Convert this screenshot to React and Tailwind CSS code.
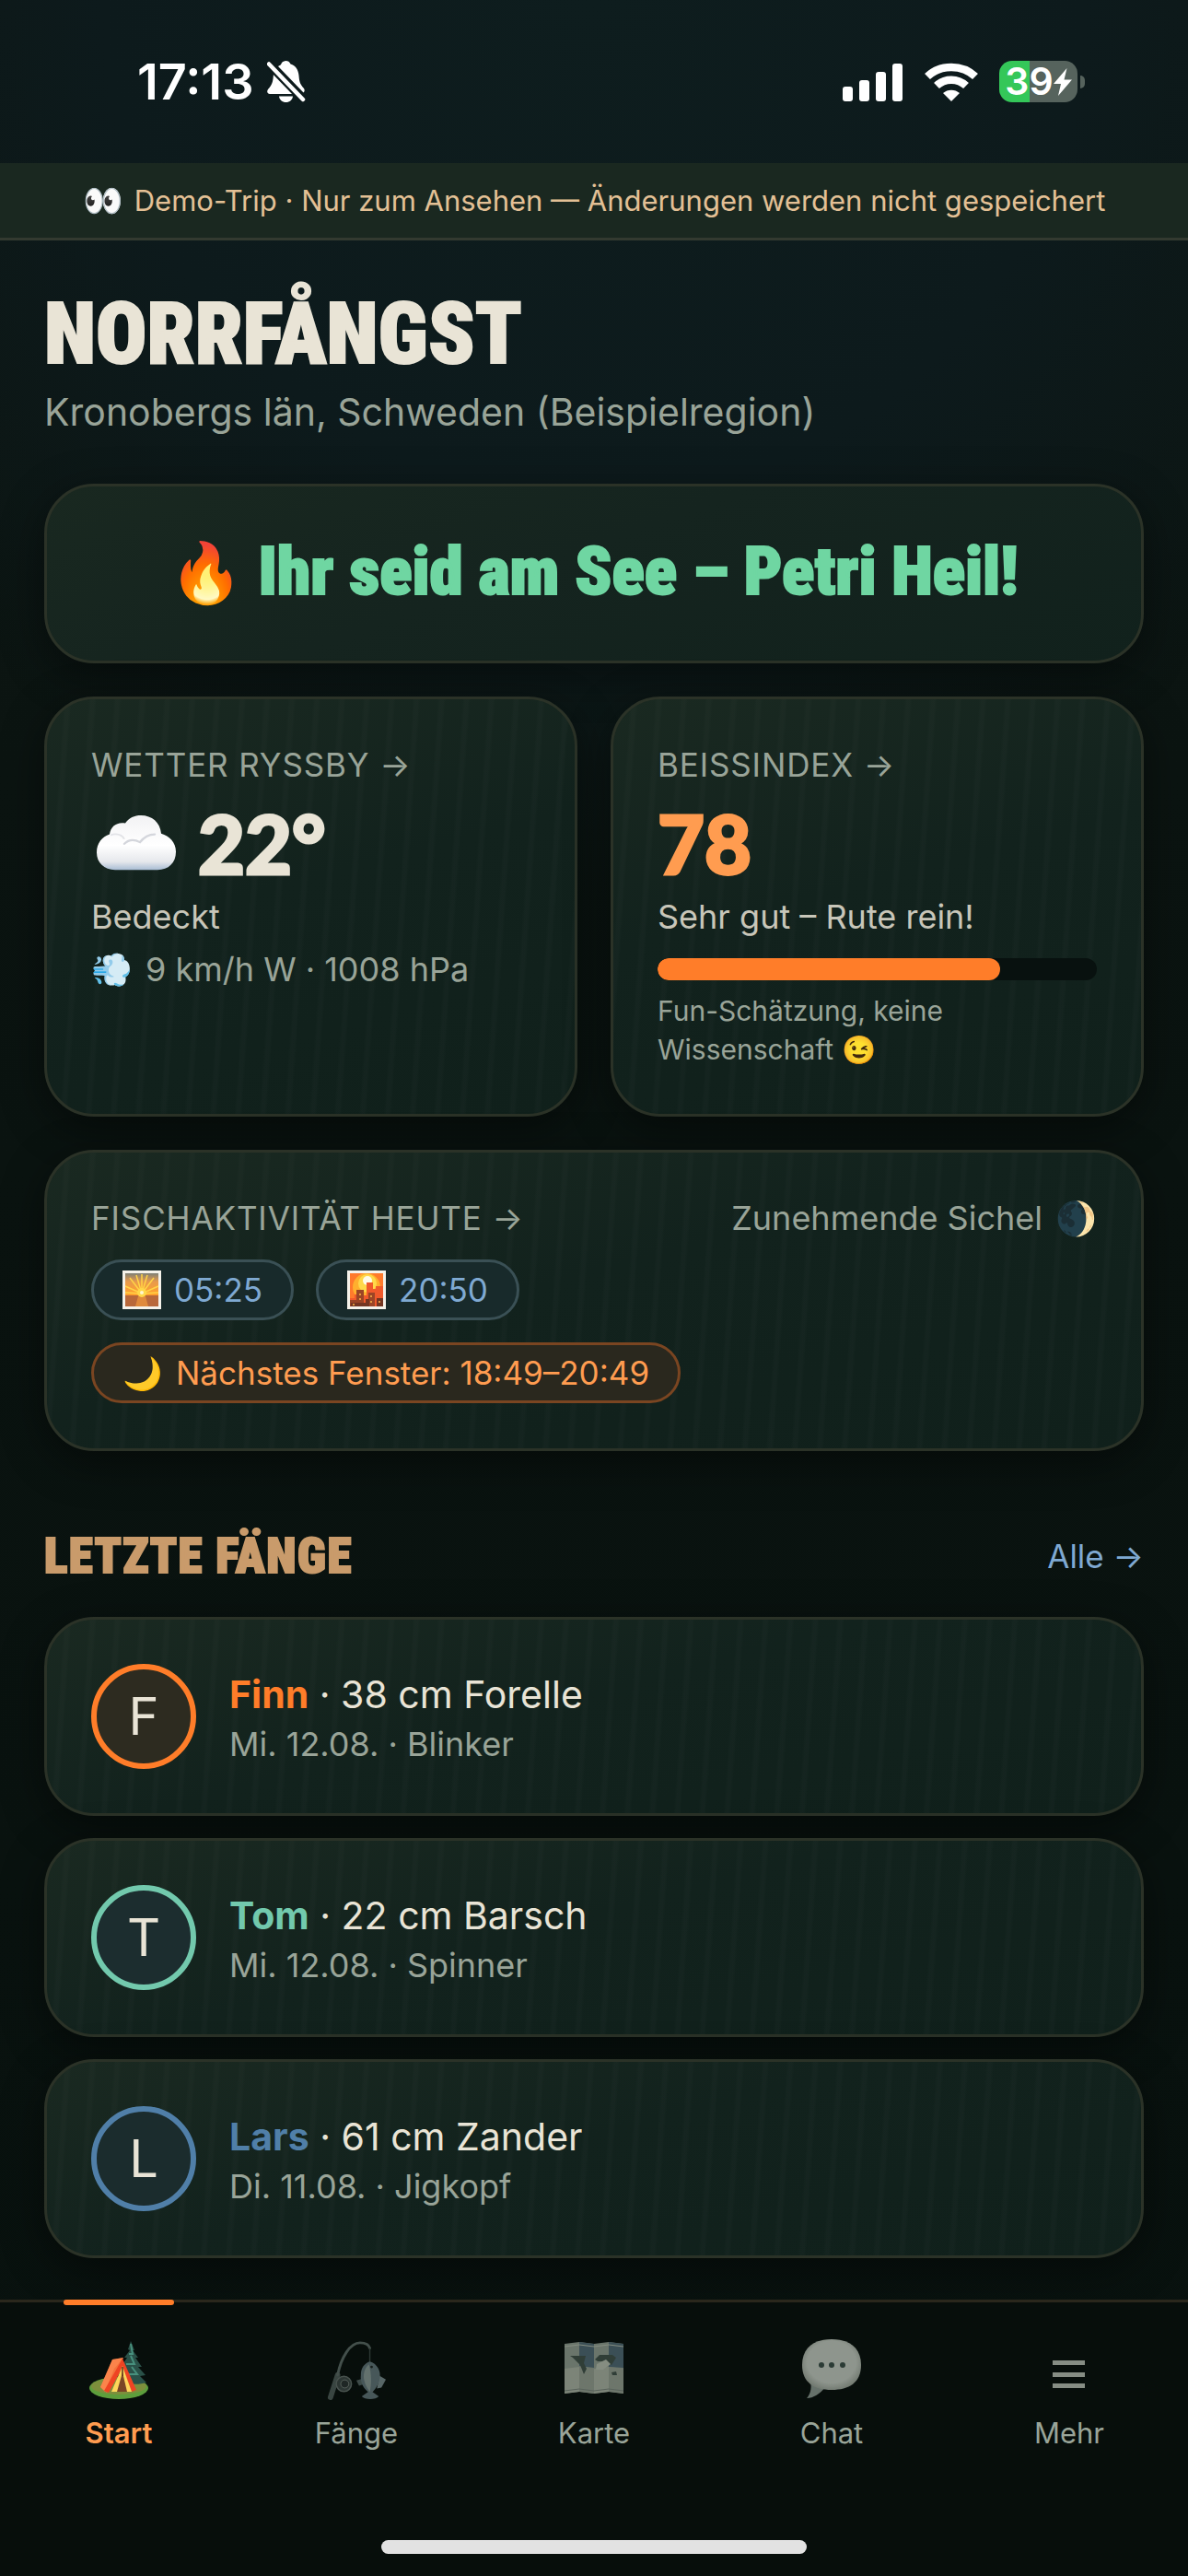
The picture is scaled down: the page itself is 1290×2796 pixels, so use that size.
const display = 'font-["Roboto_Condensed","Roboto",sans-serif] font-black [-webkit-text-stroke:2px_currentColor]';
const numeral = 'font-["Lato",sans-serif] text-[88px] leading-none font-black [-webkit-text-stroke:3px_currentColor]';
const plain =
  'rounded-[54px] border-[3px] border-[#2b3227] shadow-[0_12px_48px_rgba(0,0,0,0.45)] bg-[linear-gradient(160deg,#192820_0%,#15241f_45%,#11211c_100%)]';
const card =
  'rounded-[54px] border-[3px] border-[#2b3227] shadow-[0_12px_48px_rgba(0,0,0,0.45)] bg-[repeating-linear-gradient(94deg,transparent_0px,transparent_18px,rgba(255,255,255,0.016)_21px,rgba(255,255,255,0.016)_24px,transparent_27px),linear-gradient(165deg,#1a2921_0%,#12221d_45%,#10201b_100%)]';

function BellOff() {
  return (
    <svg viewBox="0 0 42 46" className="h-[46px] w-[42px]" aria-label="Stumm" fill="#fff">
      <path d="M12 6 C14 5 15 4.500 15.500 3 C16.500 .8 19 0 20.500 0 C22.500 0 24.500 1 25.500 3.500 C31 5 34 10 34.500 16 C35 22 35.500 25 40 30 C41 31.500 41 33 39.500 34.500 Z" />
      <path d="M7 14 L28 36 H3 C0 36 -.5 33 1 31 C5.500 26 6.500 23 7 14 Z" />
      <path d="M13 38.500 H28 C27.500 42.500 24.500 45 20.500 45 C16.500 45 13.500 42.500 13 38.500 Z" />
      <path d="M2 3.500 L39 42" stroke="#0d1a1b" strokeWidth="9" />
      <path d="M2 3.500 L39 42" stroke="#fff" strokeWidth="4.500" strokeLinecap="round" />
    </svg>
  );
}

function Signal() {
  return (
    <svg viewBox="0 0 66 42" className="h-[42px] w-[66px]" fill="#fff" aria-label="Empfang">
      <rect x="0" y="26" width="11" height="16" rx="3" />
      <rect x="18" y="19" width="11" height="23" rx="3" />
      <rect x="36" y="10" width="11" height="32" rx="3" />
      <rect x="54" y="1" width="11" height="41" rx="3" />
    </svg>
  );
}

function Wifi() {
  return (
    <svg viewBox="0 0 58 42" className="h-[42px] w-[58px]" fill="none" aria-label="WLAN">
      <path d="M3 15 C17 1.500 41 1.500 55 15" stroke="#fff" strokeWidth="8.500" />
      <path d="M13 25 C22 16.500 36 16.500 45 25" stroke="#fff" strokeWidth="8.500" />
      <path d="M29 42 L20 33 C25 28.500 33 28.500 38 33 Z" fill="#fff" />
    </svg>
  );
}

function Battery() {
  return (
    <div className="flex items-center gap-[3px]" aria-label="Akku 39 %">
      <div className="flex h-[45px] w-[85px] items-center justify-center rounded-[14px] bg-[linear-gradient(90deg,#34c759_39%,#56635d_39%)]">
        <span className="text-[41px] leading-none font-semibold text-white">39</span>
        <svg viewBox="0 0 20 30" className="h-[30px] w-[20px]" fill="#fff">
          <path d="M14.500 0 L0 17 H8 L5 30 L20 12.500 H11.500 Z" />
        </svg>
      </div>
      <div className="h-[14px] w-[5px] rounded-r-full bg-[#56635d]" />
    </div>
  );
}

function Cloud() {
  return (
    <svg viewBox="0 0 86 70" preserveAspectRatio="none" className="h-[60px] w-[86px]" aria-label="Wolke">
      <defs>
        <linearGradient id="cloudFill" x1="0" y1="0" x2="0" y2="1">
          <stop offset="0" stopColor="#f2f2f4" />
          <stop offset="0.55" stopColor="#ffffff" />
          <stop offset="0.85" stopColor="#e6e8ec" />
          <stop offset="1" stopColor="#a9bdd4" />
        </linearGradient>
      </defs>
      <path
        d="M20 69 C8 69 0 60 0 47 C0 35 6 27 14 24 C15 14 22 8 31 10 C35 3 41 0 48 0 C60 0 69 9 70 23 C79 26 86 34 86 46 C86 60 78 69 66 69 Z"
        fill="url(#cloudFill)"
      />
      <path d="M30 36 C36 29 42 31 47 34 C51 28 56 24 63 24" fill="none" stroke="#d4d6dc" strokeWidth="2.500" strokeLinecap="round" />
      <path d="M15 25 C22 22 28 25 30 30" fill="none" stroke="#e2e3e7" strokeWidth="2" />
    </svg>
  );
}

function Sunrise() {
  return (
    <svg viewBox="0 0 42 42" className="size-[42px]" aria-label="Sonnenaufgang">
      <defs>
        <linearGradient id="riseSky" x1="0" y1="0" x2="0" y2="1">
          <stop offset="0" stopColor="#7f8076" />
          <stop offset="0.25" stopColor="#e79a4c" />
          <stop offset="0.6" stopColor="#ffa02e" />
        </linearGradient>
      </defs>
      <rect width="42" height="42" fill="#f5f2ea" />
      <rect x="3" y="3" width="36" height="36" fill="url(#riseSky)" />
      <g stroke="#ffd447" strokeWidth="1.500">
        <path d="M21 25 L3 17 M21 25 L8 8 M21 25 L15 5 M21 25 L21 4 M21 25 L27 5 M21 25 L34 8 M21 25 L39 17 M21 25 L3 24 M21 25 L39 24" />
      </g>
      <rect x="3" y="27" width="36" height="12" fill="#b9683a" />
      <path d="M17 28 H25 L28 39 H14 Z" fill="#e08a3c" />
      <circle cx="21" cy="24" r="5" fill="#ffd84a" />
      <circle cx="21" cy="24" r="2" fill="#fff6cf" />
    </svg>
  );
}

function Sunset() {
  return (
    <svg viewBox="0 0 42 42" className="size-[42px]" aria-label="Sonnenuntergang">
      <rect width="42" height="42" fill="#f5f2ea" />
      <rect x="3" y="3" width="36" height="36" fill="#ff7a2c" />
      <circle cx="21" cy="18" r="15" fill="#ffb02e" />
      <circle cx="22" cy="14" r="10" fill="#ffd84a" />
      <circle cx="22" cy="11" r="5" fill="#fffbe8" />
      <path d="M3 39 V30 H8 V26 H12 V22 H18 V27 H21 V13 H28 V20 H31 V17 H39 V39 Z" fill="#f0592b" />
      <path d="M3 39 V32 H10 V21 H18 V39 Z M23 39 V24 H30 V39 Z" fill="#9b4526" />
      <path d="M4 35 H20 V39 H4 Z M20 31 H24 V39 H20 Z M32 30 H39 V39 H32 Z" fill="#743521" />
      <path d="M6 37 h2 M13 26 h2 M13 31 h2 M25 28 h2 M25 34 h2 M34 34 h2" stroke="#ffb648" strokeWidth="1.500" />
    </svg>
  );
}

function Tent() {
  return (
    <svg viewBox="0 0 66 66" className="size-[66px]" aria-hidden="true">
      <ellipse cx="33" cy="53" rx="32" ry="12" fill="#5d9e3c" />
      <ellipse cx="33" cy="51" rx="30" ry="9" fill="#7d8f3c" />
      <rect x="45" y="42" width="4" height="9" fill="#6a4127" />
      <path d="M46 2 L50 12 L48 12 L54 20 L51 20 L58 30 L54 30 L62 39 L56 40 L63 47 C53 50 44 49 36 45 L34 40 L38 30 L36 29 L42 20 L39 20 L45 12 L43 11 Z" fill="#2a5148" />
      <path d="M46 5 L48 16 L44 16 M46 18 L50 27 L41 27 M47 30 L53 38 L42 38" fill="none" stroke="#47907d" strokeWidth="2" />
      <path d="M26 22 L38 20 L20 58 L13 52 Z" fill="#f4743b" />
      <path d="M26 22 L38 20 L28 32 L18 57 L13 52 Z" fill="#ff8f56" opacity=".6" />
      <path d="M37 21 L52 55 L47 57 L37 31 L22 58 L17 56 Z" fill="#ef4423" />
      <path d="M37 29 L47 57 H25 Z" fill="#ffd65a" />
      <path d="M37 36 L42 57 H31 Z" fill="#7a4626" />
      <path d="M37 30 V40" stroke="#5c3218" strokeWidth="1.500" />
    </svg>
  );
}

function Rod() {
  return (
    <svg viewBox="12 16 68 68" className="size-[66px] opacity-80" aria-hidden="true" fill="none">
      <path d="M17 81 L25 56" stroke="#46534f" strokeWidth="6" strokeLinecap="round" />
      <path d="M25 56 C29 36 39 20 50 20 C56 20 60 22 61 26" stroke="#52605b" strokeWidth="3" strokeLinecap="round" />
      <path d="M61 26 V43" stroke="#36423e" strokeWidth="1.500" />
      <circle cx="32" cy="66" r="8.500" fill="#36403d" stroke="#59645f" strokeWidth="1.500" />
      <circle cx="33" cy="66" r="4.500" fill="#262e2c" stroke="#6b7670" strokeWidth="1" />
      <path d="M72 57 L79 61 L74 70 L69 71 Z" fill="#6c7d7e" />
      <path d="M53 60 L46 62 L49 68 L55 66 Z" fill="#4b5a58" />
      <path d="M61 41 C69 43 74 52 72 60 C71 67 67 72 64 75 L71 80 C68 84 55 84 52 80 L59 75 C54 71 50 64 51 56 C51 48 55 43 61 41 Z" fill="#586a6d" />
      <path d="M60 44 C55 48 53 56 55 63 C56 68 59 72 61 75 C63 66 63 54 60 44 Z" fill="#7b8a86" />
      <circle cx="63" cy="47" r="1.500" fill="#1b2422" />
    </svg>
  );
}

function MapIcon() {
  return (
    <svg viewBox="0 0 66 66" className="size-[66px]" aria-hidden="true">
      <path d="M1 5 L17 3 L33 5 L49 3 L65 5 V59 L49 57 L33 59 L17 57 L1 59 Z" fill="#6a756b" />
      <path d="M17 3 L33 5 V31 L17 29 Z M49 3 L65 5 V31 L49 30 Z" fill="#3b4f56" />
      <path d="M1 32 L17 30 V57 L1 59 Z M33 32 L49 30 V57 L33 59 Z" fill="#7c8478" />
      <path d="M17 30 L33 32 V59 L17 57 Z M49 30 L65 32 V59 L49 57 Z" fill="#6d766b" />
      <path d="M7 18 H15 L24 18 L22 26 L25 32 L22 38 L18 28 L10 20 Z M34 22 L39 17 H53 L57 20 L52 28 L44 24 L37 24 Z M52 36 l5 -1 l1 4 h-5 Z" fill="#303e37" />
      <path d="M36 27 L46 22 L51 27 L43 33 L35 33 Z" fill="#858d81" />
      <path d="M1 8 L17 6 L33 8 L49 6 L65 8" fill="none" stroke="#858d81" strokeWidth="1" />
      <path d="M1 56 L17 54 L33 56 L49 54 L65 56" fill="none" stroke="#59635b" strokeWidth="1" />
    </svg>
  );
}

function Chat() {
  return (
    <svg viewBox="0 0 66 66" className="size-[66px]" aria-hidden="true">
      <defs>
        <radialGradient id="chatFill" cx="0.5" cy="0.45" r="0.55">
          <stop offset="0.75" stopColor="#8e958d" />
          <stop offset="1" stopColor="#747c73" />
        </radialGradient>
      </defs>
      <path d="M10 46 C12 54 9 61 6 64 C13 64 21 59 25 53 Z" fill="#66716a" />
      <path d="M33 0 C52 0 65 9 65 28 C65 47 52 55 33 55 C14 55 1 47 1 28 C1 9 14 0 33 0 Z" fill="url(#chatFill)" />
      <g fill="#2b3b35">
        <circle cx="22" cy="28" r="3" />
        <circle cx="33" cy="28" r="3" />
        <circle cx="45" cy="28" r="3" />
      </g>
    </svg>
  );
}

function Menu() {
  return (
    <svg viewBox="0 0 66 66" className="size-[66px]" aria-hidden="true" fill="#868d84">
      <rect x="15" y="23" width="35" height="5" />
      <rect x="15" y="36" width="35" height="5" />
      <rect x="15" y="48" width="35" height="5" />
    </svg>
  );
}

const catches = [
  { name: 'Finn', text: '38 cm Forelle', sub: 'Mi. 12.08. · Blinker', color: 'text-[#ff7d29]', ring: 'border-[#ff7d29] bg-[#2d2b20]' },
  { name: 'Tom', text: '22 cm Barsch', sub: 'Mi. 12.08. · Spinner', color: 'text-[#72c9ad]', ring: 'border-[#72c9ad] bg-[#1c2d2f]' },
  { name: 'Lars', text: '61 cm Zander', sub: 'Di. 11.08. · Jigkopf', color: 'text-[#507fa8]', ring: 'border-[#507fa8] bg-[#1b2c2d]' },
];

const tabs = [
  { label: 'Start', Icon: Tent, active: true },
  { label: 'Fänge', Icon: Rod },
  { label: 'Karte', Icon: MapIcon },
  { label: 'Chat', Icon: Chat },
  { label: 'Mehr', Icon: Menu },
];

const label = 'block text-[35px] leading-[46px] tracking-wide text-[#99a498]';
const chip = 'flex h-[66px] items-center gap-[14px] rounded-full border-[3px] px-[31px] text-[35px] leading-none';

export default function App() {
  return (
    <div className="flex min-h-screen flex-col bg-[#0a1411] bg-[radial-gradient(ellipse_75%_35%_at_50%_0%,#0e1d1e_0%,#0d1a1c_55%,transparent_100%),linear-gradient(180deg,#0d1613_0%,#0a1310_45%,#08110e_100%)] font-['Inter',sans-serif] text-[#e9e4d6]">
      <div className="flex h-[177px] items-center justify-between pr-[112px] pl-[149px]">
        <div className="flex items-center gap-[14px]">
          <span className="text-[54px] leading-none font-semibold text-white">17:13</span>
          <BellOff />
        </div>
        <div className="flex items-center gap-[23px]">
          <Signal />
          <Wifi />
          <Battery />
        </div>
      </div>

      <div className="flex h-[84px] items-center justify-center gap-3 border-b-[3px] border-[#333a30] bg-[#1a2820] text-[31px] leading-none whitespace-nowrap text-[#e3c095]">
        <span className="text-[35px]">👀</span>
        <span>Demo-Trip · Nur zum Ansehen — Änderungen werden nicht gespeichert</span>
      </div>

      <main className="flex flex-col px-12 pt-[51px] pb-[45px]">
        <h1 className={`${display} text-[92px] leading-[102px]`}>NORRFÅNGST</h1>
        <p className="text-[41px] leading-[66px] text-[#99a498]">Kronobergs län, Schweden (Beispielregion)</p>

        <section className={`${plain} mt-[45px] flex h-[195px] items-center justify-center gap-4 pb-1 text-[73px] leading-none text-[#6fd6a2]`}>
          <span className="text-[64px]">🔥</span>
          <h2 className={display}>Ihr seid am See – Petri Heil!</h2>
        </section>

        <div className="mt-9 grid grid-cols-2 gap-9">
          <section className={`${card} h-[456px] p-12`}>
            <a href="#wetter" className={label}>WETTER RYSSBY →</a>
            <div className="mt-[14px] flex h-[96px] items-center gap-6 pl-[6px]">
              <Cloud />
              <span className={numeral}>22°</span>
            </div>
            <p className="mt-[5px] text-[36px] leading-[54px] text-[#c8c6b9]">Bedeckt</p>
            <p className="flex items-center gap-[14px] text-[36px] leading-[60px] text-[#99a498]">
              <span>💨</span>
              <span>9 km/h W · 1008 hPa</span>
            </p>
          </section>

          <section className={`${card} h-[456px] p-12`}>
            <a href="#beissindex" className={label}>BEISSINDEX →</a>
            <div className="mt-[14px] flex h-[96px] items-center text-[#ff9c50]">
              <span className={numeral}>78</span>
            </div>
            <p className="mt-[5px] text-[36px] leading-[54px] text-[#c8c6b9]">Sehr gut – Rute rein!</p>
            <div className="mt-[18px] h-6 overflow-hidden rounded-full bg-[#08110f]" role="progressbar" aria-label="Beissindex" aria-valuenow={78} aria-valuemin={0} aria-valuemax={100}>
              <div className="h-full w-[78%] rounded-full bg-[#ff7d29]" />
            </div>
            <p className="mt-3 text-[30px] leading-[42px] text-[#99a498]">
              Fun-Schätzung, keine
              <br />
              Wissenschaft 😉
            </p>
          </section>
        </div>

        <section className={`${card} mt-9 flex h-[327px] flex-col p-12`}>
          <div className="flex items-center justify-between">
            <a href="#aktivitaet" className={label}>FISCHAKTIVITÄT HEUTE →</a>
            <span className="flex items-center gap-[14px] text-[36px] leading-[46px] text-[#99a498]">
              <span>Zunehmende Sichel</span>
              <span>🌒</span>
            </span>
          </div>
          <div className="mt-[22px] flex flex-wrap gap-6">
            <span className={`${chip} border-[#3a5055] bg-[#182a2b] text-[#7fa9d2]`}>
              <Sunrise />
              05:25
            </span>
            <span className={`${chip} border-[#3a5055] bg-[#182a2b] text-[#7fa9d2]`}>
              <Sunset />
              20:50
            </span>
          </div>
          <div className="mt-6 flex">
            <span className={`${chip} border-[#7a4521] bg-[#2a281e] text-[#ff9c50]`}>
              <span>🌙</span>
              <span>Nächstes Fenster: 18:49–20:49</span>
            </span>
          </div>
        </section>

        <div className="mt-[84px] flex items-center justify-between">
          <h2 className={`${display} text-[53px] leading-[60px] tracking-wide text-[#c99b6b]`}>LETZTE FÄNGE</h2>
          <a href="#faenge" className="text-[35px] leading-[46px] text-[#7fa9d2]">Alle →</a>
        </div>

        <ul className="mt-9 flex flex-col gap-6">
          {catches.map((c) => (
            <li key={c.name} className={`${card} flex items-center gap-9 p-12`}>
              <div className={`${c.ring} flex size-[114px] shrink-0 items-center justify-center rounded-full border-[6px] text-[56px] leading-none`}>
                {c.name[0]}
              </div>
              <div>
                <p className="text-[41px] leading-[60px]">
                  <span className={`${c.color} font-bold`}>{c.name}</span> · {c.text}
                </p>
                <p className="text-[36px] leading-[48px] text-[#99a498]">{c.sub}</p>
              </div>
            </li>
          ))}
        </ul>
      </main>

      <nav className="mt-auto flex flex-col border-t-[3px] border-[#2a271c] bg-[#070e0b]">
        <div className="grid grid-cols-5">
          {tabs.map(({ label: name, Icon, active }) => (
            <button
              key={name}
              type="button"
              className={`relative flex flex-col items-center gap-[18px] pt-10 text-[31px] leading-[36px] ${active ? 'font-semibold text-[#ff9c50]' : 'text-[#99a498]'}`}
            >
              {active && <span className="absolute -top-[3px] h-[6px] w-[120px] rounded-[3px] bg-[#ff7d29]" />}
              <Icon />
              <span>{name}</span>
            </button>
          ))}
        </div>
        <div className="flex h-[137px] items-end justify-center pb-6">
          <div className="h-[15px] w-[462px] rounded-full bg-[#e2e2e2]" />
        </div>
      </nav>
    </div>
  );
}
